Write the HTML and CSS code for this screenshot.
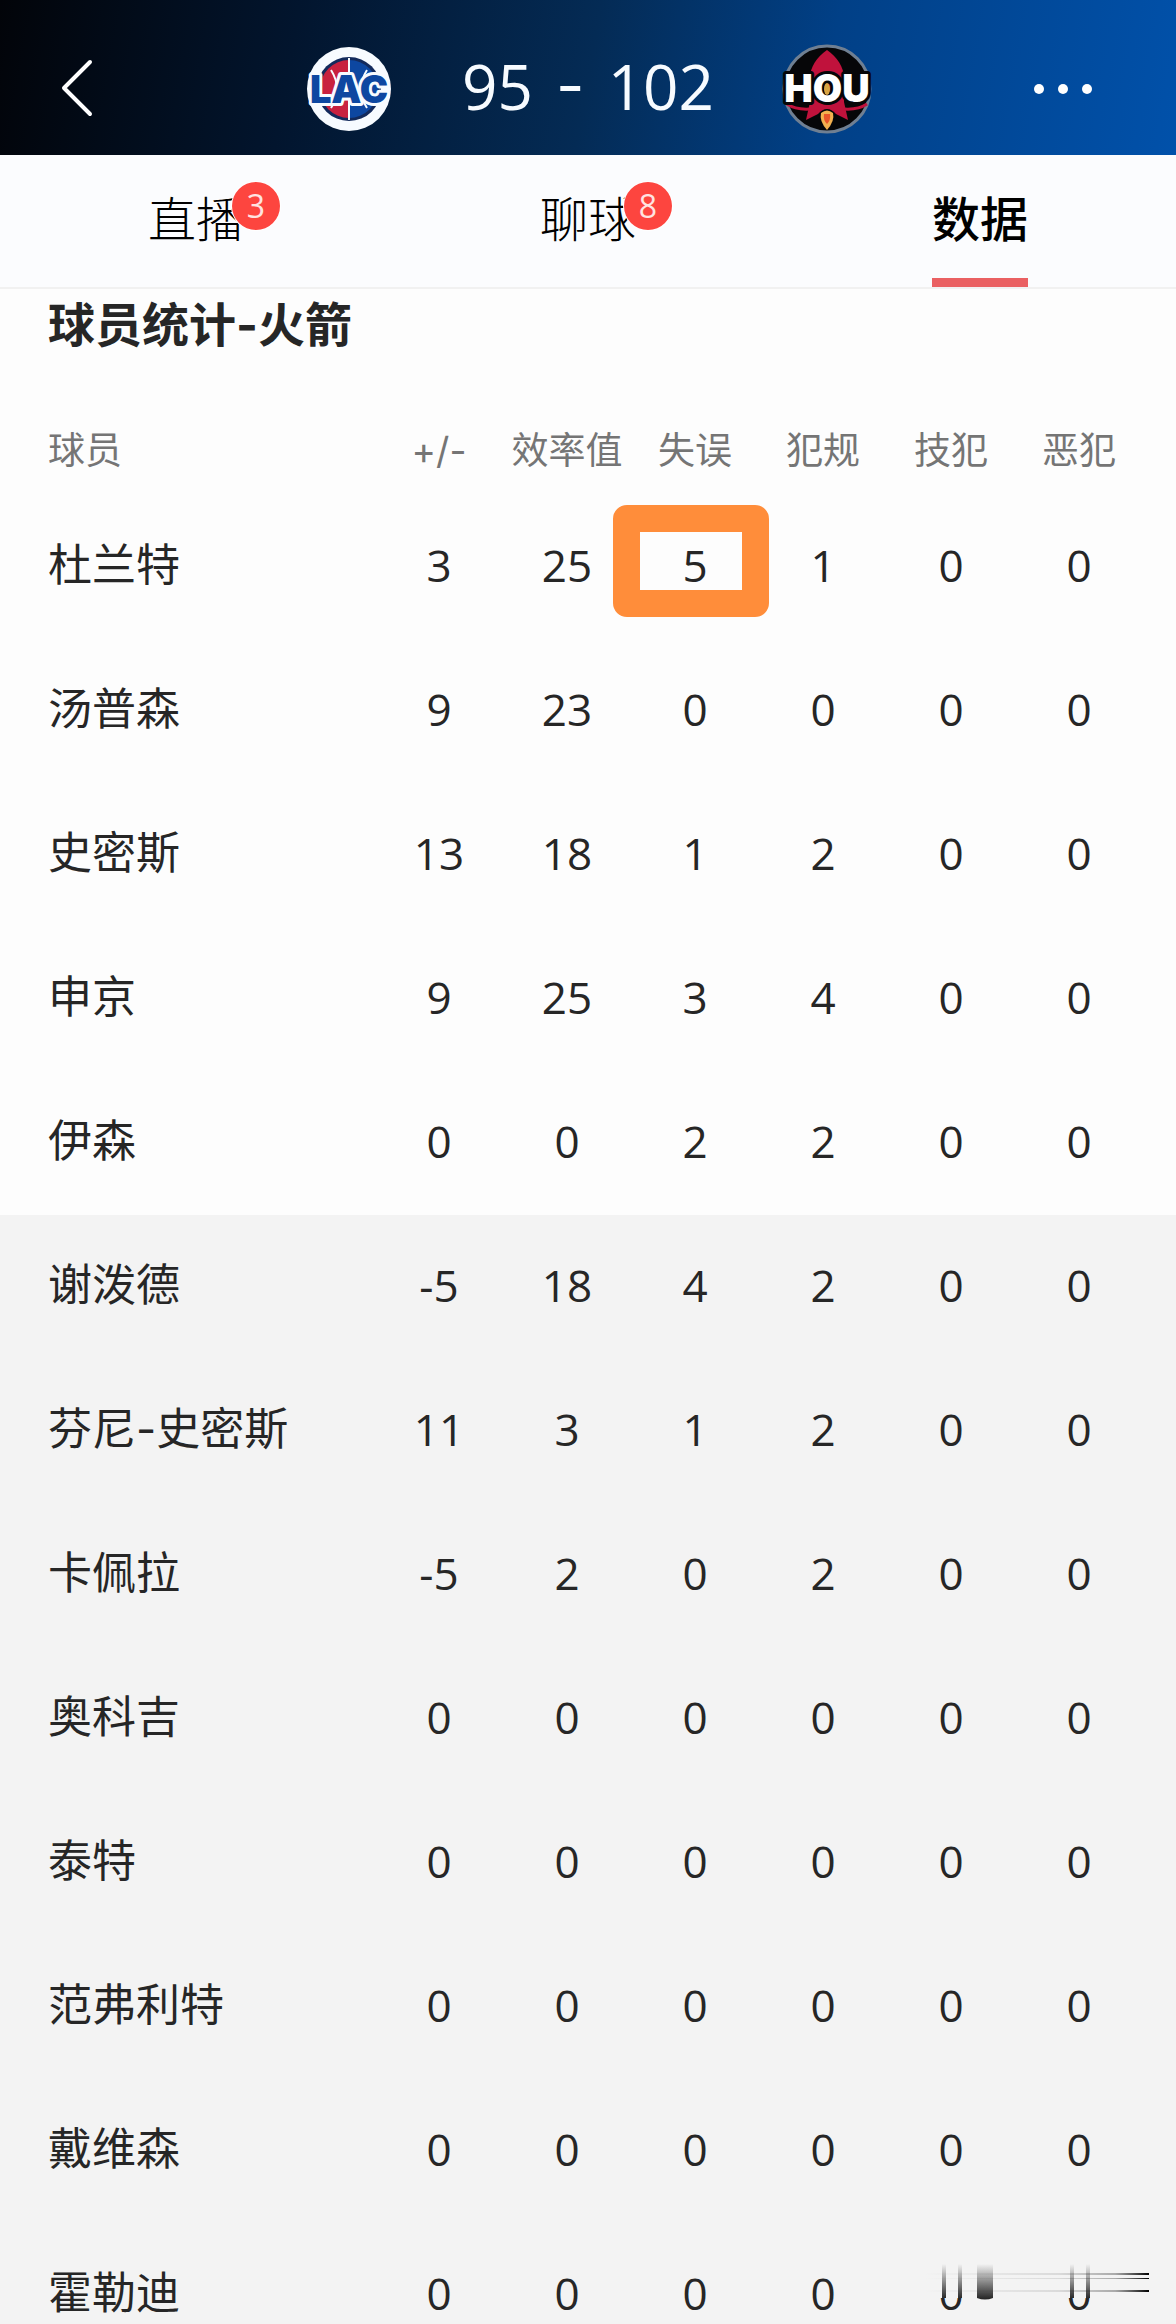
FILE: index.html
```html
<!DOCTYPE html>
<html lang="zh-CN">
<head>
    <meta charset="UTF-8">
    <meta name="viewport" content="width=device-width, initial-scale=1.0">
    <title>球员统计-火箭</title>
    <link rel="stylesheet" href="styles.css">
</head>
<body>
    <header class="topbar">
        <button class="icon-button" aria-label="返回">
            <svg width="40" height="64" viewBox="0 0 40 64"><path d="M33 5 L7 31 L33 57" fill="none" stroke="#fff" stroke-width="4" stroke-linecap="round" stroke-linejoin="round"/></svg>
        </button>
        <div class="match">
            <svg class="logo" viewBox="0 0 90 90">
                <circle cx="45" cy="45" r="42" fill="#f7fbff"/>
                <circle cx="45" cy="45" r="32" fill="#132a5c"/>
                <path d="M45 16 A29 29 0 0 0 45 74 Z" fill="#c8213f"/>
                <path d="M45 16 A29 29 0 0 1 45 74 Z" fill="#0d47a1"/>
                <path d="M45 14 V76 M27 26 Q39 45 27 64 M63 26 Q51 45 63 64" fill="none" stroke="#f7fbff" stroke-width="2"/>
                <text class="logo-text lac" x="45" y="59" text-anchor="middle">LAC</text>
            </svg>
            <div class="score"><span>95</span><span class="dash">-</span><span>102</span></div>
            <svg class="logo" viewBox="0 0 90 90">
                <circle cx="45" cy="45" r="43" fill="#060608" stroke="#6f7f92" stroke-width="3"/>
                <path d="M45 6 C55 13 62 23 62 34 L62 58 L66 76 L54 70 H36 L24 76 L28 58 V34 C28 23 35 13 45 6 Z" fill="#c0123c"/>
                <path d="M5 60 Q14 66 28 65 M85 60 Q76 66 62 65" fill="none" stroke="#c0123c" stroke-width="3"/>
                <path d="M36 70 Q45 60 54 70 L51 75 H39 Z" fill="#060608"/>
                <path d="M39 69 Q45 64 51 69 Q53 77 45 86 Q37 77 39 69 Z" fill="#f3b04f"/>
                <path d="M42 70 H48 Q49 76 45 80 Q41 76 42 70 Z" fill="#e8542a"/>
                <text class="logo-text hou" x="45" y="58" text-anchor="middle">HOU</text>
                <ellipse cx="45" cy="45" rx="3" ry="6" fill="#d9a441"/>
            </svg>
        </div>
        <button class="icon-button" aria-label="更多">
            <svg width="64" height="64" viewBox="0 0 64 64" fill="#fff"><circle cx="8" cy="32" r="5"/><circle cx="32" cy="32" r="5"/><circle cx="56" cy="32" r="5"/></svg>
        </button>
    </header>

    <nav class="tabs">
        <a href="#live"><span class="label">直播<span class="badge">3</span></span></a>
        <a href="#chat"><span class="label">聊球<span class="badge">8</span></span></a>
        <a href="#stats" class="active"><span class="label">数据</span></a>
    </nav>

    <main id="stats">
        <h2>球员统计-火箭</h2>
        <table>
            <thead>
                <tr><th class="name">球员</th><th>+/-</th><th>效率值</th><th>失误</th><th>犯规</th><th>技犯</th><th>恶犯</th></tr>
            </thead>
            <tbody>
                <tr><td class="name">杜兰特</td><td>3</td><td>25</td><td class="marked">5</td><td>1</td><td>0</td><td>0</td></tr>
                <tr><td class="name">汤普森</td><td>9</td><td>23</td><td>0</td><td>0</td><td>0</td><td>0</td></tr>
                <tr><td class="name">史密斯</td><td>13</td><td>18</td><td>1</td><td>2</td><td>0</td><td>0</td></tr>
                <tr><td class="name">申京</td><td>9</td><td>25</td><td>3</td><td>4</td><td>0</td><td>0</td></tr>
                <tr><td class="name">伊森</td><td>0</td><td>0</td><td>2</td><td>2</td><td>0</td><td>0</td></tr>
            </tbody>
            <tbody class="bench">
                <tr><td class="name">谢泼德</td><td>-5</td><td>18</td><td>4</td><td>2</td><td>0</td><td>0</td></tr>
                <tr><td class="name">芬尼-史密斯</td><td>11</td><td>3</td><td>1</td><td>2</td><td>0</td><td>0</td></tr>
                <tr><td class="name">卡佩拉</td><td>-5</td><td>2</td><td>0</td><td>2</td><td>0</td><td>0</td></tr>
                <tr><td class="name">奥科吉</td><td>0</td><td>0</td><td>0</td><td>0</td><td>0</td><td>0</td></tr>
                <tr><td class="name">泰特</td><td>0</td><td>0</td><td>0</td><td>0</td><td>0</td><td>0</td></tr>
                <tr><td class="name">范弗利特</td><td>0</td><td>0</td><td>0</td><td>0</td><td>0</td><td>0</td></tr>
                <tr><td class="name">戴维森</td><td>0</td><td>0</td><td>0</td><td>0</td><td>0</td><td>0</td></tr>
                <tr><td class="name">霍勒迪</td><td>0</td><td>0</td><td>0</td><td>0</td><td>0</td><td>0</td></tr>
            </tbody>
        </table>
        <!-- smeared corner over the last two zeros -->
        <svg class="smear" width="276" height="60" viewBox="0 0 276 60">
            <defs>
                <linearGradient id="down" x1="0" y1="0" x2="0" y2="1"><stop offset="0" stop-color="#222" stop-opacity="0"/><stop offset="1" stop-color="#222"/></linearGradient>
                <linearGradient id="across" x1="0" y1="0" x2="1" y2="0"><stop offset="0" stop-color="#222" stop-opacity="0"/><stop offset="0.6" stop-color="#222" stop-opacity="0.12"/><stop offset="0.85" stop-color="#222" stop-opacity="0.35"/><stop offset="1" stop-color="#000"/></linearGradient>
            </defs>
            <path d="M30 2 H74 V36 H30 Z M160 2 H204 V36 H160 Z" fill="#f3f3f3"/>
            <path d="M42 2 H46 V36 H42 Z M58 2 H62 V36 H58 Z M170 2 H174 V36 H170 Z M186 2 H190 V36 H186 Z M77 2 H93 V36 Q85 39 77 36 Z" fill="url(#down)"/>
            <path d="M24 11 H249 V13 H24 Z M24 16 H249 V17 H24 Z M24 28 H249 V30 H24 Z" fill="url(#across)"/>
        </svg>
    </main>
</body>
</html>
```
FILE: styles.css
```css
* {
    box-sizing: border-box;
}
body {
    margin: 0;
    background: #fdfdfd;
    color: #262626;
    font-family: "Open Sans", "Noto Sans CJK SC", sans-serif;
}
.topbar {
    display: flex;
    justify-content: space-between;
    align-items: center;
    height: 155px;
    padding: 22px 57px 0;
    background: linear-gradient(100deg, #020409 0%, #02152e 25%, #042b55 50%, #014087 70%, #0151aa 100%);
}
.icon-button {
    display: flex;
    width: 88px;
    padding: 0;
    border: none;
    background: none;
    cursor: pointer;
}
.match {
    display: flex;
    align-items: center;
    gap: 68px;
}
.logo {
    width: 90px;
    height: 90px;
    overflow: visible;
}
.logo-text {
    font-family: "Inter", "Liberation Sans", sans-serif;
    font-weight: 900;
    font-size: 38px;
    paint-order: stroke;
    stroke-linejoin: round;
}
.lac {
    fill: #0d47a1;
    stroke: #f7fbff;
    stroke-width: 6px;
}
.hou {
    fill: #fff;
    stroke: #060608;
    stroke-width: 6px;
}
.score {
    display: flex;
    justify-content: space-between;
    width: 252px;
    padding-bottom: 6px;
    color: #f7fbff;
    font-size: 62px;
    line-height: 80px;
}
.dash {
    font-family: "Inter", sans-serif;
}
.tabs {
    display: flex;
    height: 134px;
    border-bottom: 2px solid #f1f1f1;
    background: #fbfcfe;
}
.tabs a {
    flex: 1;
    display: flex;
    justify-content: center;
    color: #000;
    font-size: 48px;
    font-weight: 300;
    line-height: 128px;
    text-decoration: none;
}
.label {
    position: relative;
}
.tabs .active {
    font-weight: 500;
}
.active .label {
    border-bottom: 9px solid #ea6062;
}
.badge {
    position: absolute;
    left: 84px;
    top: 27px;
    width: 48px;
    height: 48px;
    border-radius: 50%;
    background: #fd453f;
    box-shadow: 0 0 0 1px #fff;
    color: #ffe3e1;
    font-size: 32px;
    font-weight: 400;
    line-height: 48px;
    text-align: center;
}
main {
    position: relative;
    padding: 0 33px 0 48px;
    background: linear-gradient(#fdfdfd 926px, #f3f3f3 926px);
}
h2 {
    margin: 0;
    font-family: "Inter", "Noto Sans CJK SC", sans-serif;
    font-size: 47px;
    font-weight: 700;
    line-height: 72px;
}
table {
    width: 100%;
    table-layout: fixed;
    border-collapse: collapse;
}
th, td {
    width: 128px;
    padding: 0;
    text-align: center;
    white-space: nowrap;
}
th {
    height: 132px;
    padding-top: 48px;
    color: #757575;
    font-family: "Inter", "Noto Sans CJK SC", sans-serif;
    font-size: 37px;
    font-weight: 400;
    line-height: 84px;
}
td {
    height: 144px;
    font-size: 44px;
    line-height: 60px;
}
.name {
    width: auto;
    font-family: "Inter", "Noto Sans CJK SC", sans-serif;
    text-align: left;
}
.marked {
    position: relative;
}
/* hand-drawn frame round the turnovers figure */
.marked::after {
    content: "";
    position: absolute;
    left: 50%;
    top: 50%;
    box-sizing: border-box;
    width: 156px;
    height: 112px;
    margin: -60px 0 0 -82px;
    border: 27px solid #ff8d3a;
    border-radius: 14px;
}
.smear {
    position: absolute;
    right: 0;
    bottom: 43px;
}
```
